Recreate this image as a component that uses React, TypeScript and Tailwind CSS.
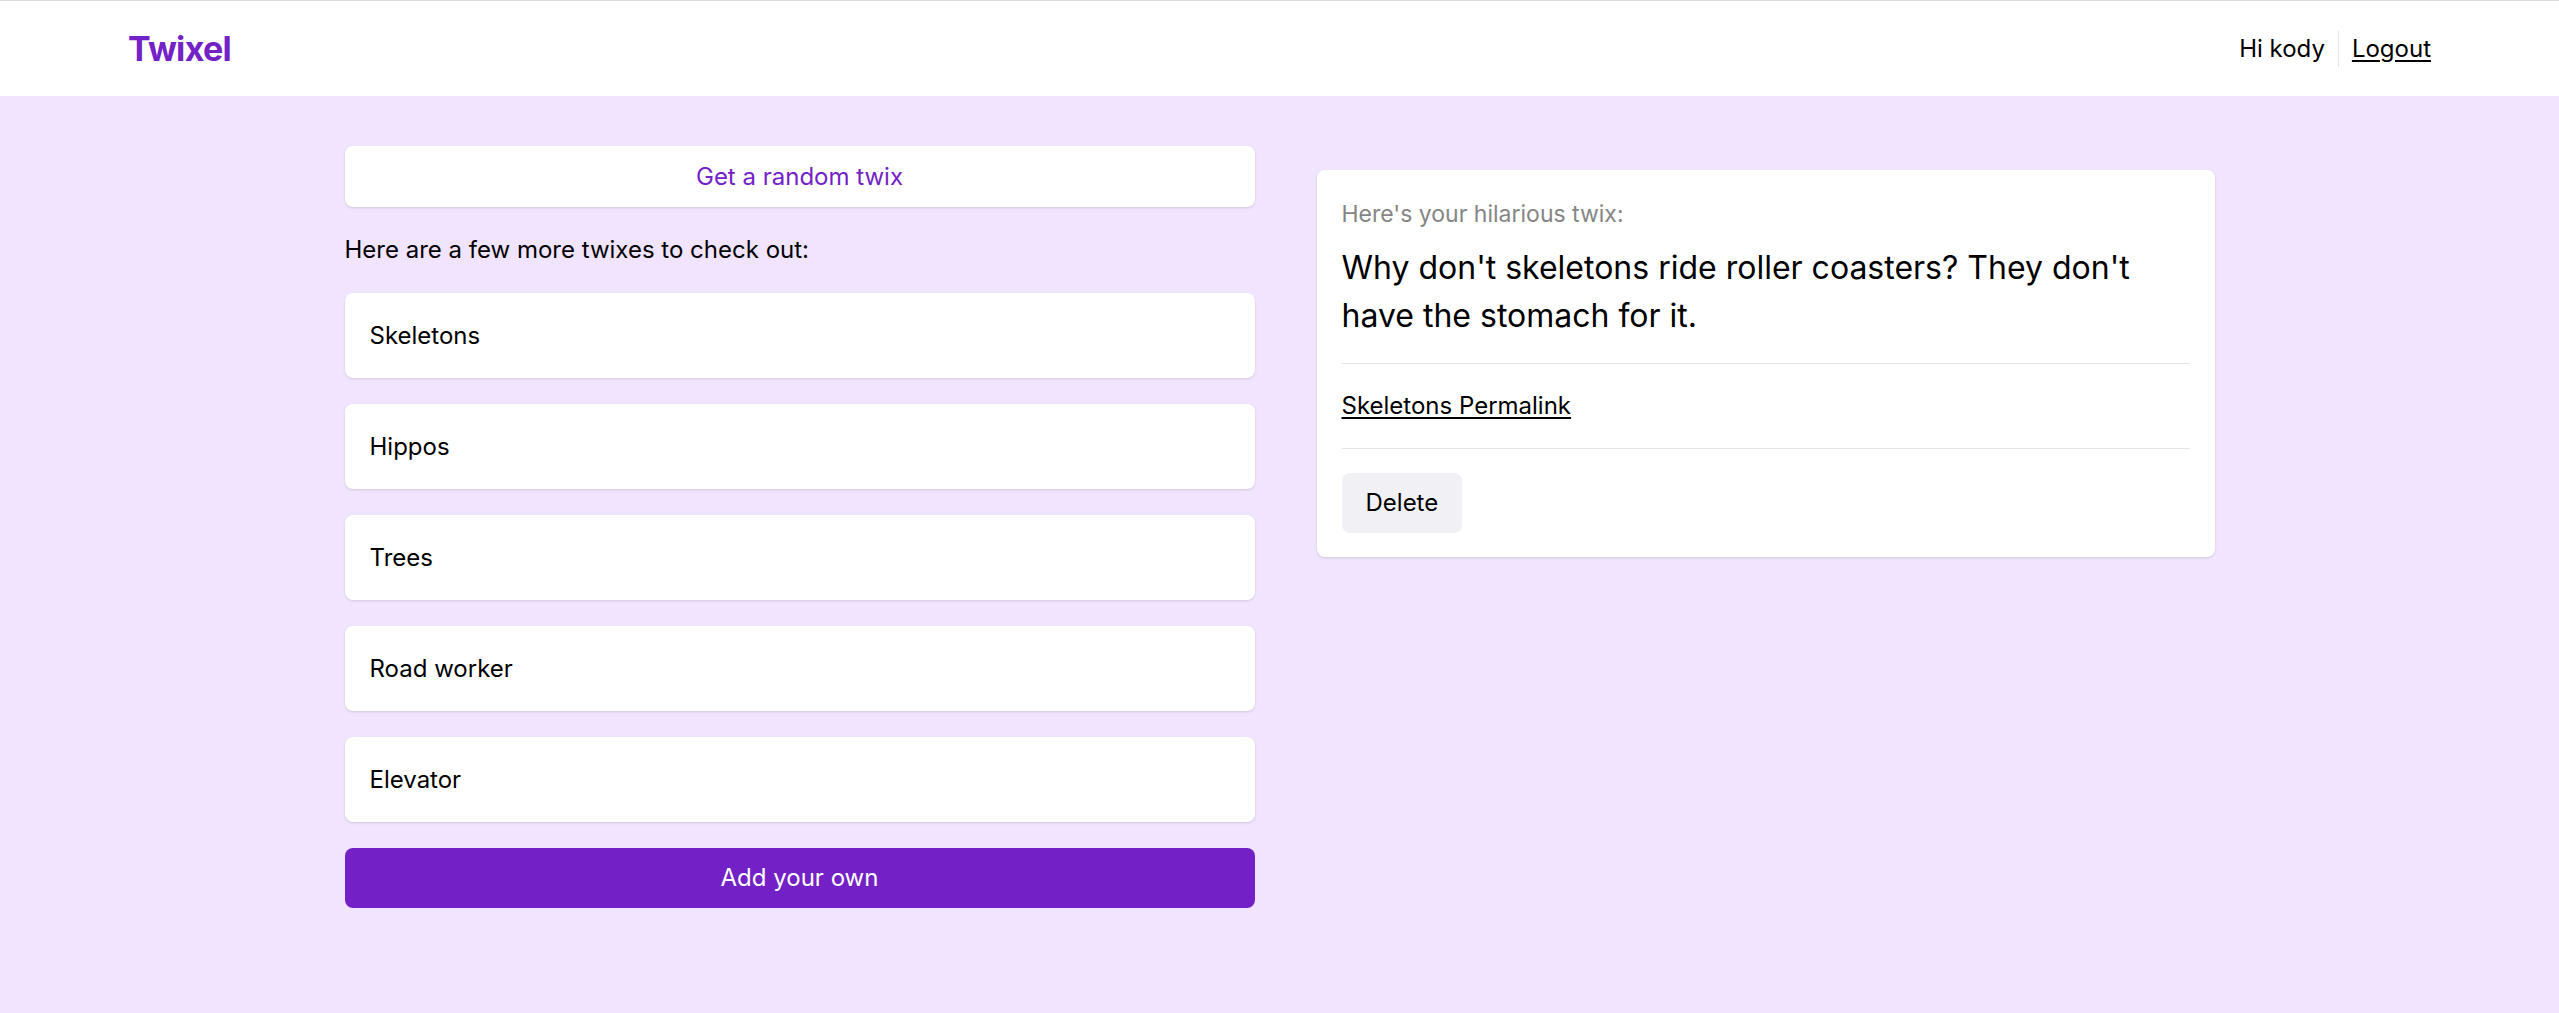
import React from 'react';

const twixes = ['Skeletons', 'Hippos', 'Trees', 'Road worker', 'Elevator'];

const App = () => {
  return (
    <div className="min-h-screen bg-[#f1e4fe] font-['Inter',sans-serif] text-black">
      {/* Header */}
      <header className="h-[96px] bg-white border-t border-[#dcdcdc] flex items-center justify-between px-[128px]">
        <a className="text-[34px] font-bold tracking-[-0.02em] text-[#7322c7] leading-none">Twixel</a>
        <div className="flex items-center text-[24px] leading-[32px]">
          <span>Hi kody</span>
          <span className="mx-[13px] w-px h-[36px] bg-[#e4e4e4]" />
          <a className="underline underline-offset-[3px]">Logout</a>
        </div>
      </header>

      {/* Main */}
      <main className="flex justify-center items-start gap-[62px] pt-[50px]">
        {/* Left column */}
        <div className="w-[910px] flex flex-col">
          <button className="h-[61px] w-full bg-white rounded-lg shadow-sm text-[24px] text-[#7322c7]">
            Get a random twix
          </button>
          <p className="mt-[26px] text-[24px] leading-[34px]">Here are a few more twixes to check out:</p>
          <ul className="mt-[26px] flex flex-col gap-[26px]">
            {twixes.map((name) => (
              <li key={name}>
                <a className="h-[85px] flex items-center px-[25px] bg-white rounded-lg shadow-sm text-[24px]">
                  {name}
                </a>
              </li>
            ))}
          </ul>
          <button className="mt-[26px] h-[60px] w-full bg-[#7321c7] rounded-lg text-white text-[24px]">
            Add your own
          </button>
        </div>

        {/* Right column: current twix */}
        <div className="w-[898px] mt-[24px] bg-white rounded-lg shadow-sm pt-[29px] pb-[24px] px-[25px]">
          <p className="text-[23px] leading-[30px] text-[#858585]">Here's your hilarious twix:</p>
          <p className="mt-[15px] text-[32px] leading-[48px]">
            Why don't skeletons ride roller coasters? They don't have the stomach for it.
          </p>
          <hr className="mt-[23px] border-0 h-px bg-[#e5e5e5]" />
          <div className="py-[26px]">
            <a className="text-[24px] leading-[32px] underline underline-offset-[3px]">Skeletons Permalink</a>
          </div>
          <hr className="border-0 h-px bg-[#e5e5e5]" />
          <button className="mt-[24px] h-[60px] px-[24px] bg-[#f0f0f5] rounded-lg text-[24px]">Delete</button>
        </div>
      </main>
    </div>
  );
};

export default App;
